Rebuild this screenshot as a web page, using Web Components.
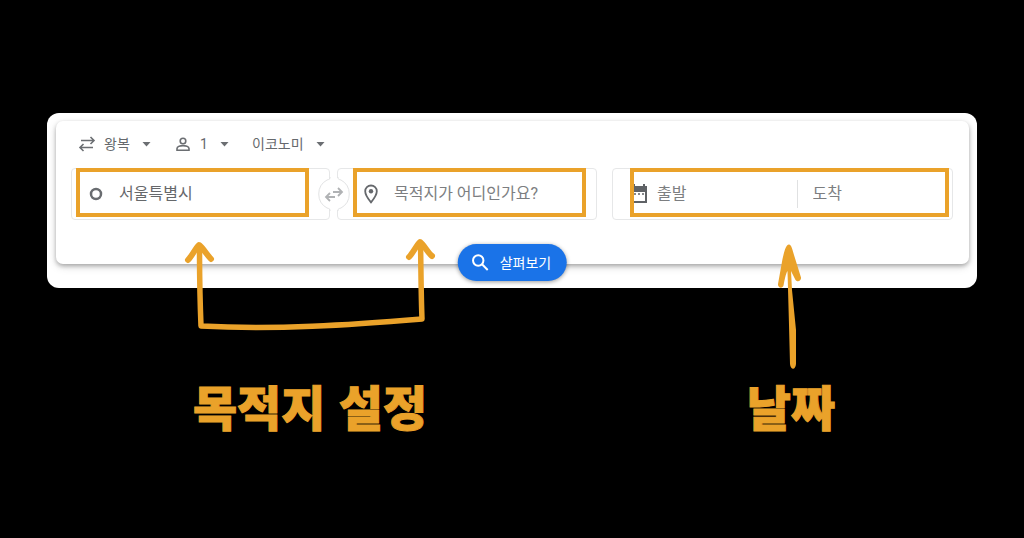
<!DOCTYPE html>
<html lang="ko">
<head>
<meta charset="utf-8">
<meta name="viewport" content="width=device-width, initial-scale=1">
<title>항공편 검색 안내</title>
<style>
  html { background: #000; }
  body { margin: 0; font-family: Roboto, "Noto Sans CJK KR", sans-serif; color: #5f6368; --accent: #eaa22a; --line: #e6e7e8; }
</style>
</head>
<body>
<guide-page></guide-page>
<script>
const define = (name, html) => customElements.define(name, class extends HTMLElement {
  constructor() {
    super();
    const t = document.createElement('template');
    t.innerHTML = html;
    this.attachShadow({ mode: 'open' }).append(t.content.cloneNode(true));
  }
});

// Borderless drop-down: leading icon in the slot, options from the "options" attribute
customElements.define('option-select', class extends HTMLElement {
  constructor() {
    super();
    this.attachShadow({ mode: 'open' }).innerHTML = `
    <style>
      :host { display: flex; align-items: center; position: relative; }
      ::slotted(svg) { width: 18px; height: 18px; margin-right: 8px; flex: none; }
      select { appearance: none; border: 0; margin: 0; padding: 0 21px 0 0; background: none; font: 14px/20px Roboto, "Noto Sans CJK KR", sans-serif; color: #66696d; }
      .caret { position: absolute; right: 0; top: 8px; width: 9px; height: 5px; pointer-events: none; }
    </style>
    <slot></slot><select></select>
    <svg class="caret" viewBox="0 0 9 5"><path d="M.5 0h8L4.500 4.500z" fill="#6b6e72"/></svg>`;
    const s = this.shadowRoot.querySelector('select');
    s.setAttribute('aria-label', this.getAttribute('label'));
    this.getAttribute('options').split(',').forEach(o => s.add(new Option(o)));
  }
});

// Bordered field; the accent frame marks the part a guide talks about
define('search-field', `
  <style>
    :host { display: flex; align-items: center; position: relative; box-sizing: border-box; height: 52px; min-width: 0; border: 1px solid var(--line); border-radius: 4px; background: #fff; }
    .frame { position: absolute; top: -1px; bottom: 2px; left: var(--frame-left); right: var(--frame-right); border: 4px solid var(--accent); pointer-events: none; }
  </style>
  <slot></slot><div class="frame"></div>`);

customElements.define('field-input', class extends HTMLElement {
  constructor() {
    super();
    this.attachShadow({ mode: 'open' }).innerHTML = `
    <style>
      :host { display: block; flex: 1; min-width: 0; }
      input { display: block; width: 100%; box-sizing: border-box; border: 0; margin: 0; padding: 0; outline: 0; background: none; font: 16px/24px Roboto, "Noto Sans CJK KR", sans-serif; color: #66686b; }
      input::placeholder { color: #7c7e81; opacity: 1; }
    </style><input type="text">`;
    const i = this.shadowRoot.querySelector('input');
    i.setAttribute('aria-label', this.getAttribute('label'));
    i.placeholder = this.getAttribute('placeholder') || '';
    i.value = this.getAttribute('value') || '';
  }
});

define('swap-button', `
  <style>
    :host { display: block; position: relative; z-index: 1; }
    button { position: absolute; left: 50%; top: 50%; width: 36px; height: 36px; transform: translate(-50%, -50%); border: 0; padding: 0; background: none; }
    svg { display: block; }
  </style>
  <button type="button" aria-label="출발지와 목적지 바꾸기">
    <svg width="36" height="36" viewBox="0 0 36 36" fill="none">
      <path d="M14 2c0 1-1 1.500-3 2a16 16 0 0 0 0 28c2 .5 3 1 3 2h8c0-1 1-1.500 3-2a16 16 0 0 0 0-28c-2-.5-3-1-3-2z" fill="#fff"/>
      <path d="M14 1v1c0 1-1 1.500-3 2a16 16 0 0 0 0 28c2 .5 3 1 3 2v1M22 1v1c0 1 1 1.500 3 2a16 16 0 0 1 0 28c-2 .5-3 1-3 2v1" stroke="#e2e3e4"/>
      <path d="M17 16h9M22 12l4 4-4 4M19 21h-9M14 17l-4 4 4 4" stroke="#b0b2b4" stroke-width="1.800"/>
    </svg>
  </button>`);

define('search-button', `
  <style>
    :host { display: block; }
    button { display: flex; align-items: center; gap: 11px; height: 37px; padding: 0 15px 0 14px; border: 0; border-radius: 19px; background: #1a73e8; color: #fff; font: 400 14px/20px Roboto, "Noto Sans CJK KR", sans-serif; box-shadow: 0 1px 4px #0006; white-space: nowrap; }
    svg { width: 17px; height: 17px; }
  </style>
  <button type="button">
    <svg viewBox="0 0 17 17" fill="none" stroke="#fff" stroke-width="2"><circle cx="6.500" cy="6.500" r="5.200"/><path d="M10.300 10.300l5.700 5.700"/></svg>
    <slot></slot>
  </button>`);

define('flight-search', `
  <style>
    :host { display: block; position: relative; padding: 8px 8px 24px 9px; border-radius: 12px; background: #fff; }
    form { margin: 0; padding: 13px 16px 44px 15px; border-radius: 7px; background: #fff; box-shadow: 0 2px 4px #0004, 0 3px 9px #0002; }
    .options { display: flex; align-items: center; height: 20px; padding-left: 7px; margin-bottom: 14px; }
    .passengers { margin-left: 23px; }
    .cabin { margin-left: 23px; }
    .fields { display: grid; grid-template-columns: 259fr 7px 260fr 15px 341fr; }
    .dates { grid-column: 5; }
    .from { --frame-left: 4px; --frame-right: 20px; }
    .to { --frame-left: 15px; --frame-right: 10px; }
    .dates { --frame-left: 17px; --frame-right: 3px; }
    .field-icon { flex: none; }
    .from .field-icon { margin: 0 16px 0 17px; }
    .to .field-icon { margin: 0 14px 0 24px; }
    .dates .field-icon { margin: 0 8px 0 18px; }
    .divider { width: 1px; height: 28px; margin-right: 15px; background: #e0e1e2; }
    search-button { position: absolute; left: 50%; bottom: 7px; transform: translateX(-50%); }
  </style>
  <form>
    <div class="options">
      <option-select label="여행 유형" options="왕복,편도">
        <svg viewBox="0 0 18 18" fill="none" stroke="#6b6e72" stroke-width="1.600"><path d="M3 5.500h13M12.500 2l3.500 3.500L12.500 9M15 12.500H2M5.500 9L2 12.500 5.500 16"/></svg>
      </option-select>
      <option-select class="passengers" label="승객 수" options="1,2,3,4">
        <svg viewBox="0 0 18 18" fill="none" stroke="#6b6e72" stroke-width="1.600"><circle cx="9" cy="6" r="2.800"/><path d="M3 15.200v-1.700c0-2 3.700-2.900 6-2.900s6 .9 6 2.900v1.700z"/></svg>
      </option-select>
      <option-select class="cabin" label="좌석 등급" options="이코노미,비즈니스"></option-select>
    </div>
    <div class="fields">
      <search-field class="from">
        <svg class="field-icon" width="14" height="14" viewBox="0 0 14 14"><circle cx="7" cy="7" r="5" fill="none" stroke="#696c70" stroke-width="2.500"/></svg>
        <field-input label="출발지" value="서울특별시"></field-input>
      </search-field>
      <swap-button></swap-button>
      <search-field class="to">
        <svg class="field-icon" width="18" height="20" viewBox="0 0 18 20"><path d="M9 1.500a5.800 5.800 0 0 0-5.800 5.800C3.200 11.500 9 18.300 9 18.300s5.800-6.800 5.800-11A5.800 5.800 0 0 0 9 1.500z" fill="none" stroke="#65686c" stroke-width="1.800"/><circle cx="9" cy="7.300" r="2.200" fill="#65686c"/></svg>
        <field-input label="목적지" placeholder="목적지가 어디인가요?"></field-input>
      </search-field>
      <search-field class="dates">
        <svg class="field-icon" width="18" height="20" viewBox="0 0 18 20"><path d="M1 3h14v15H1z" fill="none" stroke="#5f6266" stroke-width="2"/><path d="M0 2h16v6H0zM2 0h2v3H2zM12 0h2v3h-2z" fill="#5f6266"/><path d="M3 10h2M7 10h2M11 10h2" stroke="#5f6266" stroke-width="1.500"/></svg>
        <field-input label="출발 날짜" placeholder="출발"></field-input>
        <div class="divider"></div>
        <field-input label="도착 날짜" placeholder="도착"></field-input>
      </search-field>
    </div>
  </form>
  <search-button>살펴보기</search-button>`);

// Hand-drawn arrow above a headline
define('guide-note', `
  <style>
    :host { display: flex; flex-direction: column; align-items: center; pointer-events: none; }
    h2 { margin: 0; font: 900 48px/56px "Noto Sans CJK KR", sans-serif; color: var(--accent); -webkit-text-stroke: 1px var(--accent); white-space: nowrap; }
  </style>
  <slot name="arrow"></slot><h2><slot></slot></h2>`);

define('guide-page', `
  <style>
    :host { display: block; padding: 113px 47px 0; }
    .notes { display: grid; grid-template-columns: 526fr 32fr 372fr; margin-top: -58px; position: relative; pointer-events: none; }
    guide-note:last-child { grid-column: 3; }
    svg { display: block; margin-bottom: 7px; }
    .stroke { fill: none; stroke: #eaa22a; stroke-linecap: round; stroke-linejoin: round; }
    .solid { fill: #eaa22a; }
  </style>
  <flight-search></flight-search>
  <div class="notes">
    <guide-note>
      <svg slot="arrow" width="260" height="140" viewBox="180 230 260 140" aria-hidden="true"><path class="stroke" stroke-width="6" d="M188 260C192 256 195 249 199 245C203 248 207 255 211 259M409 257C413 253 416 246 420 242C424 245 428 253 432 256"/><path class="stroke" stroke-width="5.500" d="M199.500 246C199.500 274 200 302 201 326C275 330 350 325 422 319C421 294 421 268 420.500 243"/></svg>
      목적지 설정
    </guide-note>
    <guide-note>
      <svg slot="arrow" width="40" height="140" viewBox="771 230 40 140" aria-hidden="true"><path class="solid" d="M789 244.500C791.500 244.500 792.500 250 794 255L801 277.500C801.500 281 797.500 282.500 795.500 280L791 271L792 290L796 330V364C795.500 370.500 790.500 370 790 364L789 325L787.500 271C785.500 274 784.500 281 783.500 285.500C782.500 289 777.500 288 778 284L782.500 259C784 253 785.500 244.500 789 244.500z"/></svg>
      날짜
    </guide-note>
  </div>`);
</script>
</body>
</html>
